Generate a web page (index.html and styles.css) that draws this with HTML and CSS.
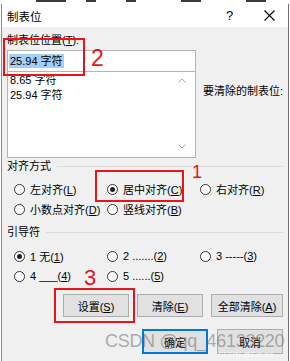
FILE: index.html
```html
<!DOCTYPE html>
<html lang="zh-CN">
<head>
    <meta charset="UTF-8">
    <meta name="viewport" content="width=device-width, initial-scale=1.0">
    <title>制表位</title>
    <link rel="stylesheet" href="styles.css">
</head>
<body>
    <div class="behind">
        <i class="w1"></i><i class="w2"></i><i class="w3"></i><i class="w4"></i><i class="w5"></i>
    </div>
    <div class="dialog">
        <div class="titlebar">
            <span class="title">制表位</span>
            <span class="help">?</span>
            <span class="close">
                <svg width="11" height="11" viewBox="0 0 11 11"><path d="M0.5 0.5 L10.5 10.5 M10.5 0.5 L0.5 10.5" stroke="#000" stroke-width="1.1" fill="none"/></svg>
            </span>
        </div>

        <div class="content">
            <div class="tabrow">
                <div class="tabcol">
                    <div class="label">制表位位置(<u>T</u>):</div>
                    <div class="posinput"><span class="sel">25.94 字符</span></div>
                    <div class="list">
                        <div class="items">
                            <div>8.65 字符</div>
                            <div>25.94 字符</div>
                        </div>
                        <div class="scroll">
                            <svg width="8" height="5" viewBox="0 0 8 5"><path d="M0.5 4.5 L4 1 L7.5 4.5" stroke="#a6a6a6" fill="none"/></svg>
                            <svg width="8" height="5" viewBox="0 0 8 5"><path d="M0.5 0.5 L4 4 L7.5 0.5" stroke="#a6a6a6" fill="none"/></svg>
                        </div>
                    </div>
                </div>
                <div class="clearcol">要清除的制表位:</div>
            </div>

            <div class="group"><span>对齐方式</span><i></i></div>
            <div class="radios first">
                <label class="radio"><b></b><span>左对齐(<u>L</u>)</span></label>
                <label class="radio on"><b></b><span>居中对齐(<u>C</u>)</span></label>
                <label class="radio"><b></b><span>右对齐(<u>R</u>)</span></label>
                <label class="radio"><b></b><span>小数点对齐(<u>D</u>)</span></label>
                <label class="radio"><b></b><span>竖线对齐(<u>B</u>)</span></label>
            </div>

            <div class="group lead"><span>引导符</span><i></i></div>
            <div class="radios second">
                <label class="radio on"><b></b><span>1 无(<u>1</u>)</span></label>
                <label class="radio"><b></b><span>2 .......(<u>2</u>)</span></label>
                <label class="radio"><b></b><span>3 -----(<u>3</u>)</span></label>
                <label class="radio"><b></b><span>4 ___(<u>4</u>)</span></label>
                <label class="radio"><b></b><span>5 ......(<u>5</u>)</span></label>
            </div>

            <div class="btnrow">
                <button class="btn">设置(<u>S</u>)</button>
                <button class="btn">清除(<u>E</u>)</button>
                <button class="btn wide">全部清除(<u>A</u>)</button>
            </div>
            <div class="btnrow bottom">
                <button class="btn default">确定</button>
                <button class="btn">取消</button>
            </div>
        </div>

        <div class="mark box2"></div>
        <div class="num n2">2</div>
        <div class="mark box1"></div>
        <div class="num n1">1</div>
        <div class="mark box3"></div>
        <div class="num n3">3</div>

        <div class="watermark">CSDN @qq_46133220</div>
        <div class="watermark small">CSDN @Eduse</div>
    </div>
</body>
</html>
```

FILE: styles.css
```css
body {
    margin: 0;
    background: #fff;
    font-family: "Liberation Sans", "Noto Sans CJK SC", sans-serif;
    font-size: 11px;
    color: #000;
    overflow: hidden;
}

/* strip of the Word window showing above the dialog */
.behind {
    height: 4px;
    overflow: hidden;
    background: #fff;
    display: flex;
    align-items: flex-start;
}
.behind i {
    height: 2px;
    background: #3a3a3a;
}
.w1 { width: 30px; margin-left: 36px; }
.w2 { width: 10px; margin-left: 20px; }
.w3 { width: 10px; margin-left: 30px; }
.w4 { width: 20px; margin-left: 45px; }
.w5 { width: 20px; margin-left: 45px; }

.dialog {
    position: relative;
    margin-left: 1px;
    width: 286px;
    height: 357px;
    border-left: 1px solid #8c8c8c;
    border-right: 1px solid #6e6e6e;
    background: #f0f0f0;
}

.titlebar {
    display: flex;
    align-items: center;
    height: 23px;
    background: #fff;
    padding-left: 5px;
}
.title {
    flex: 1;
    font-size: 11.5px;
}
.help {
    width: 38px;
    font-size: 13px;
}
.close {
    width: 24px;
    display: flex;
}

.content {
    padding: 5px 5px 0 5px;
}

.tabrow {
    display: flex;
    gap: 7px;
}
.tabcol {
    width: 193px;
}
.label {
    line-height: 16px;
    white-space: nowrap;
}
.posinput {
    margin-top: 2px;
    height: 20px;
    background: #fff;
    border: 1px solid #b4b4b4;
    display: flex;
    align-items: center;
    padding-left: 1px;
}
.sel {
    background: #a6cdf2;
    line-height: 14px;
    padding: 0 1px;
}
.list {
    height: 85px;
    background: #fff;
    border: 1px solid #b4b4b4;
    border-top: none;
    display: flex;
}
.items {
    flex: 1;
    padding: 1px 0 0 2px;
    line-height: 15px;
}
.scroll {
    width: 17px;
    display: flex;
    flex-direction: column;
    justify-content: space-between;
    padding: 6px 0 8px 0;
}
.clearcol {
    margin-top: 51px;
    line-height: 16px;
    white-space: nowrap;
}

.group {
    display: flex;
    align-items: center;
    gap: 6px;
    line-height: 16px;
}
.group i {
    flex: 1;
    height: 1px;
    background: #dcdcdc;
}
.group.lead {
    margin-top: 5px;
}

.radios {
    display: grid;
    grid-template-columns: 93px 93px 1fr;
    grid-auto-rows: 20px;
    padding-left: 7px;
    margin-top: 5px;
}
.radios.second {
    margin-top: 6px;
}
.radio {
    display: flex;
    align-items: center;
    gap: 5px;
    white-space: nowrap;
}
.radio b {
    flex-shrink: 0;
    width: 11px;
    height: 11px;
    box-sizing: border-box;
    border: 1px solid #333;
    border-radius: 50%;
    background: #fff;
    display: flex;
    align-items: center;
    justify-content: center;
}
.radio.on b::after {
    content: "";
    width: 5px;
    height: 5px;
    border-radius: 50%;
    background: #222;
}

.btnrow {
    display: flex;
    justify-content: flex-end;
    gap: 8px;
    margin-top: 8px;
}
.btnrow.bottom {
    gap: 9px;
    margin-top: 12px;
}
.btn {
    width: 66px;
    height: 23px;
    margin: 0;
    padding: 0;
    font-family: inherit;
    font-size: 11px;
    color: #000;
    background: #e1e1e1;
    border: 1px solid #adadad;
}
.btn.wide {
    width: 72px;
}
.btnrow.bottom .btn {
    height: 25px;
}
.btn.default {
    border: 1px solid #0078d7;
    box-shadow: inset 0 0 0 1px #0078d7;
}

.mark {
    position: absolute;
    border: 2px solid #e8141a;
    box-sizing: border-box;
}
.box2 { left: 1px; top: 34px; width: 82px; height: 38px; }
.box1 { left: 93px; top: 166px; width: 89px; height: 32px; }
.box3 { left: 52px; top: 284px; width: 81px; height: 35px; }

.num {
    position: absolute;
    color: #e8141a;
    line-height: 1;
}
.n2 { left: 89px; top: 43px; font-size: 23px; }
.n1 { left: 190px; top: 159px; font-size: 18px; }
.n3 { left: 82px; top: 263px; font-size: 22px; }

.watermark {
    position: absolute;
    left: 103px;
    top: 328px;
    font-size: 18px;
    line-height: 1;
    letter-spacing: -0.3px;
    color: rgba(110, 110, 110, 0.55);
    white-space: nowrap;
}
.watermark.small {
    left: 216px;
    top: 347px;
    font-size: 8px;
    letter-spacing: 0;
    color: rgba(255, 255, 255, 0.85);
}
```
